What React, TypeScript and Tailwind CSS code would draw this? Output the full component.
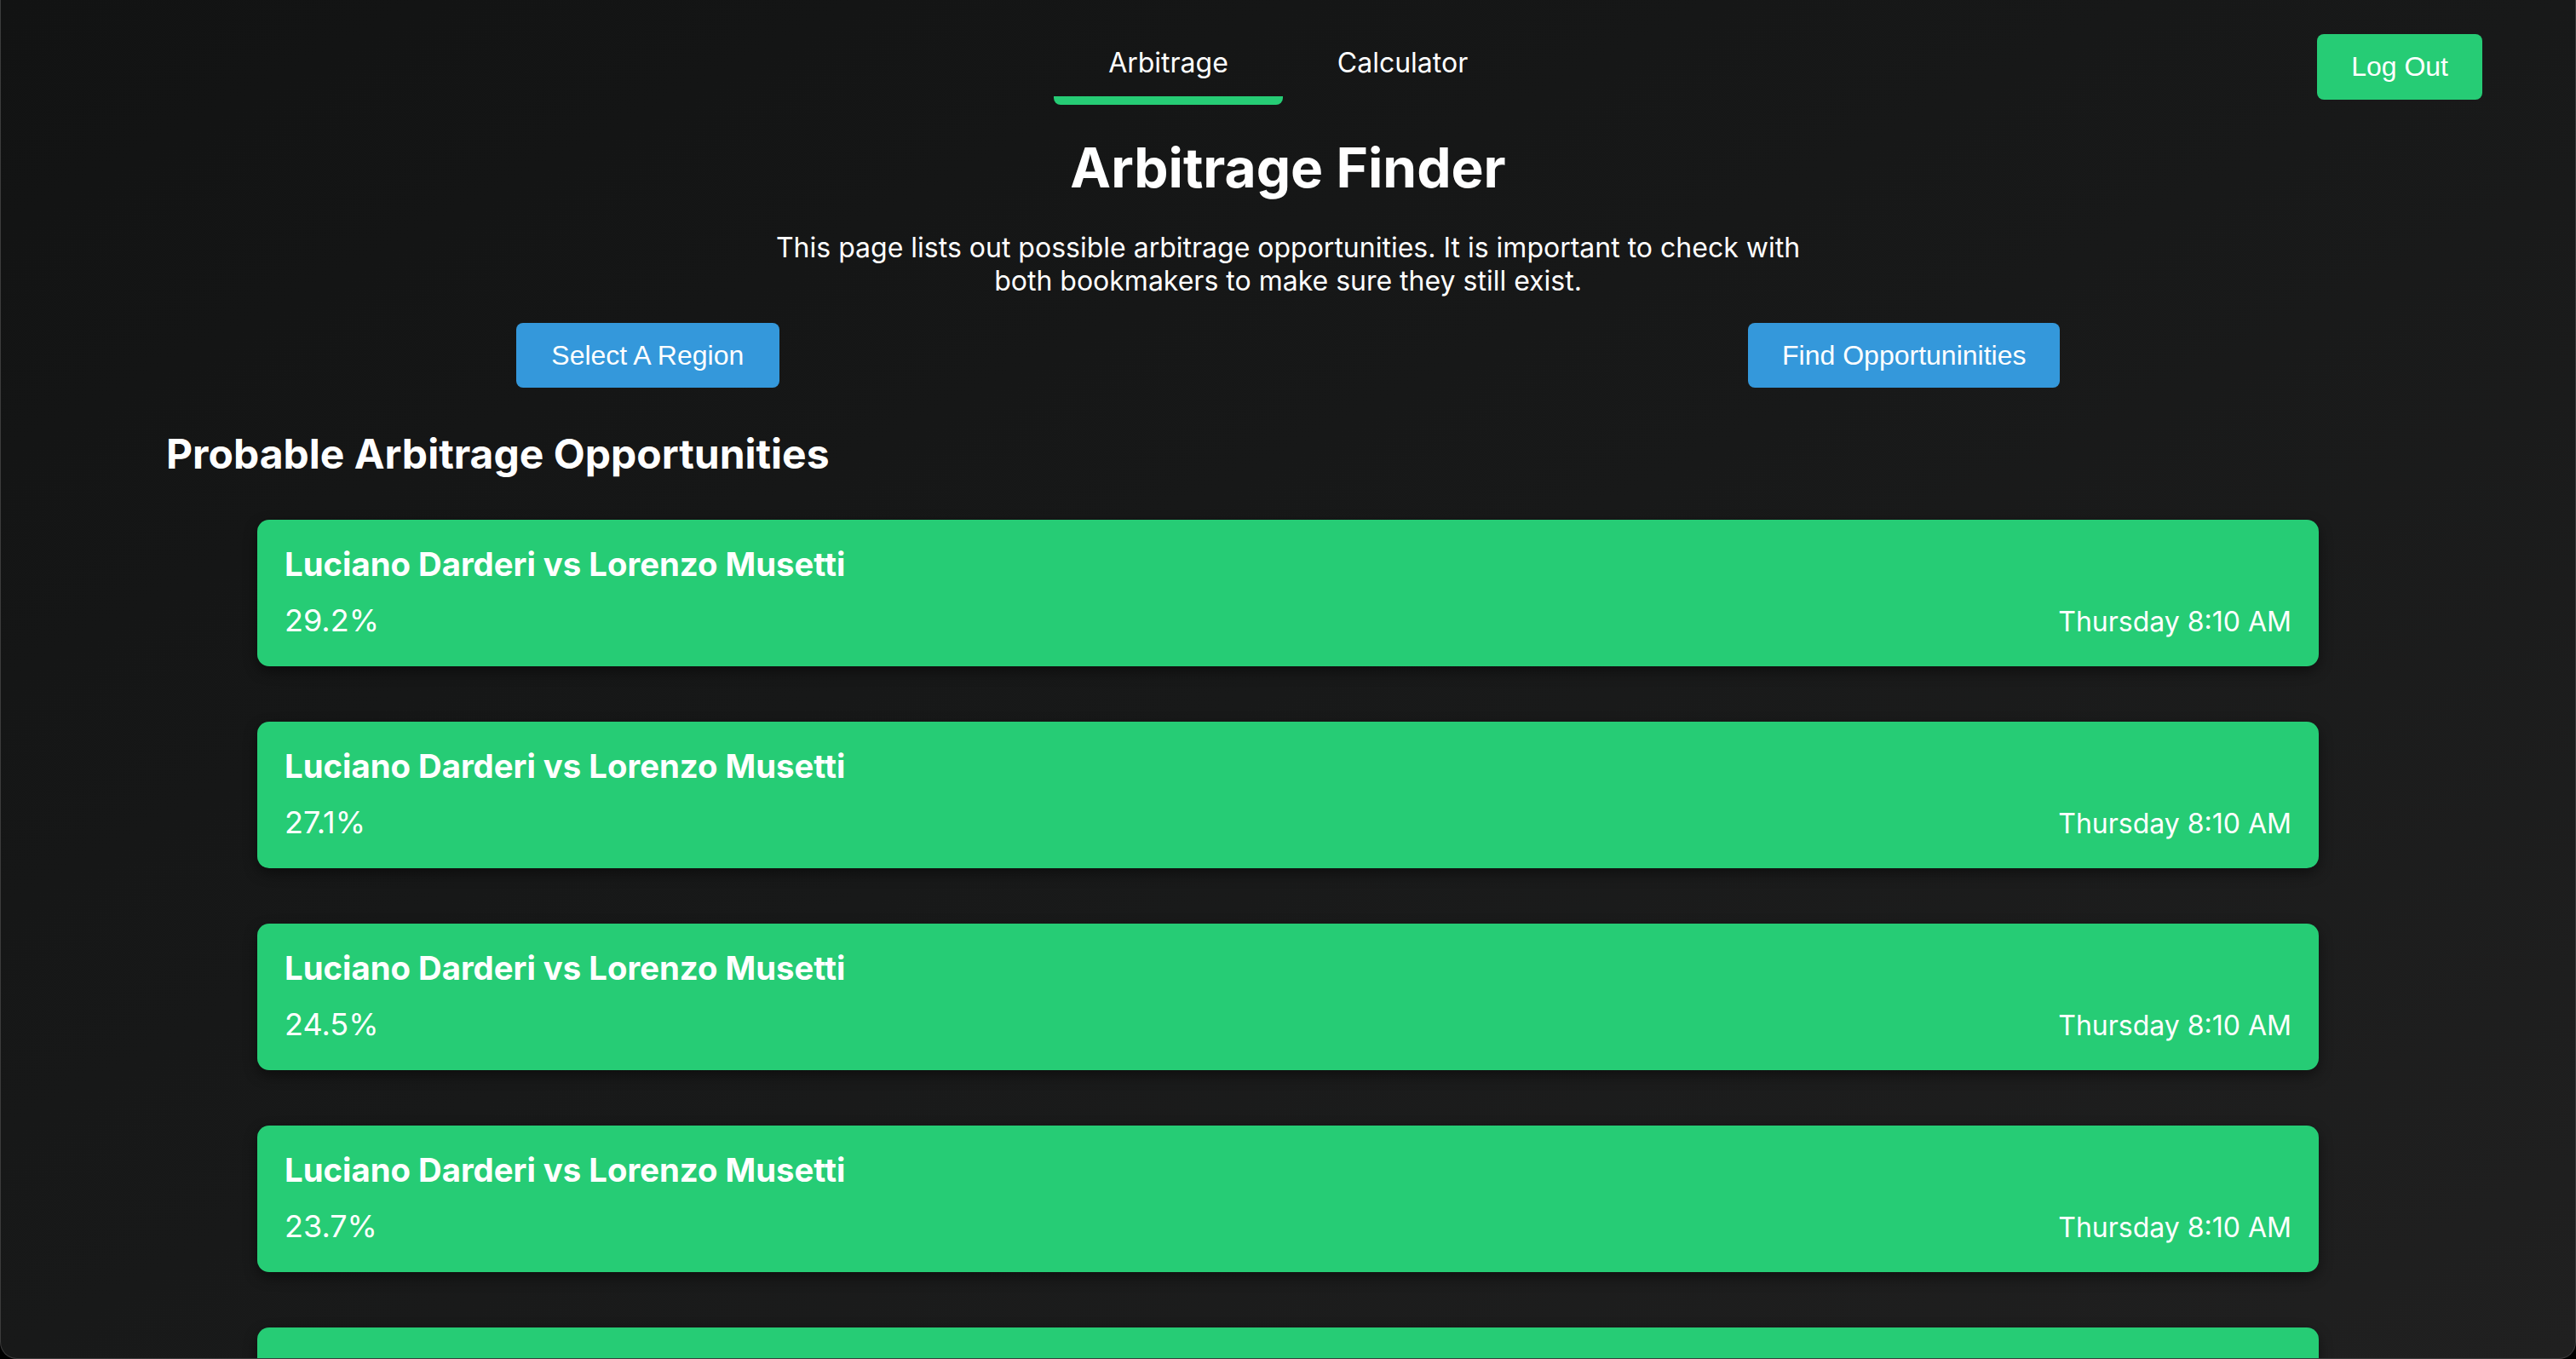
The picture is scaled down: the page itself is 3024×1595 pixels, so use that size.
import React from "react";

const cards = ["29.2%", "27.1%", "24.5%", "23.7%", "22.9%"];

export default function App() {
  return (
    <div className="w-[3024px] h-[1595px] overflow-hidden bg-black">
      <div
        className="h-full w-full overflow-hidden rounded-b-[20px] border-x border-b border-[#3c3c3c] bg-gradient-to-br from-[#121313] via-[#181919] to-[#202020] text-white"
        style={{ fontFamily: "Inter, 'Noto Sans', sans-serif" }}
      >
        <header className="grid grid-cols-[1fr_auto_1fr]">
          <div />
          <nav className="flex">
            <div className="w-[269px] rounded-b-[8px] border-b-[10px] border-[#26cc75] pt-[54px] pb-[20px] text-center text-[32px] leading-[39px]">
              Arbitrage
            </div>
            <div className="w-[281px] pt-[54px] pb-[20px] text-center text-[32px] leading-[39px]">
              Calculator
            </div>
          </nav>
          <div className="flex justify-end">
            <button
              className="mt-[40px] mr-[109px] h-[77px] rounded-[8px] bg-[#26cc75] px-10 pb-[2px] text-[32px] text-white"
              style={{ fontFamily: "'Liberation Sans', Arial, sans-serif" }}
            >
              Log Out
            </button>
          </div>
        </header>

        <h1 className="mt-[35px] text-center text-[64px] font-bold leading-[77px]">Arbitrage Finder</h1>
        <p className="mx-auto mt-[36px] max-w-[1220px] text-center text-[32px] leading-[39px]">
          This page lists out possible arbitrage opportunities. It is important to check with both bookmakers to make sure they still exist.
        </p>

        <div
          className="mt-[30px] flex justify-around px-[36px]"
          style={{ fontFamily: "'Liberation Sans', Arial, sans-serif" }}
        >
          <button className="h-[76px] w-[309px] rounded-[8px] bg-[#3498db] text-[32px] text-white">Select A Region</button>
          <button className="h-[76px] w-[366px] rounded-[8px] bg-[#3498db] text-[32px] text-white">Find Opportuninities</button>
        </div>

        <h2 className="mt-[49px] pl-[194px] text-[48px] font-bold leading-[58px]">Probable Arbitrage Opportunities</h2>

        <div className="mx-auto mt-[48px] flex w-[2420px] flex-col gap-[65px]">
          {cards.map((p, i) => (
            <div
              key={i}
              className="h-[172px] rounded-[14px] bg-[#26cc75] px-[32px] pt-[29px] shadow-[0_6px_16px_rgba(0,0,0,0.45)]"
            >
              <div className="text-[38.3px] font-bold leading-[46px]">Luciano Darderi vs Lorenzo Musetti</div>
              <div className="mt-[20px] flex items-baseline justify-between">
                <span className="text-[36px] leading-[46px]">{p}</span>
                <span className="text-[32px] leading-[46px]">Thursday 8:10 AM</span>
              </div>
            </div>
          ))}
        </div>
      </div>
    </div>
  );
}
